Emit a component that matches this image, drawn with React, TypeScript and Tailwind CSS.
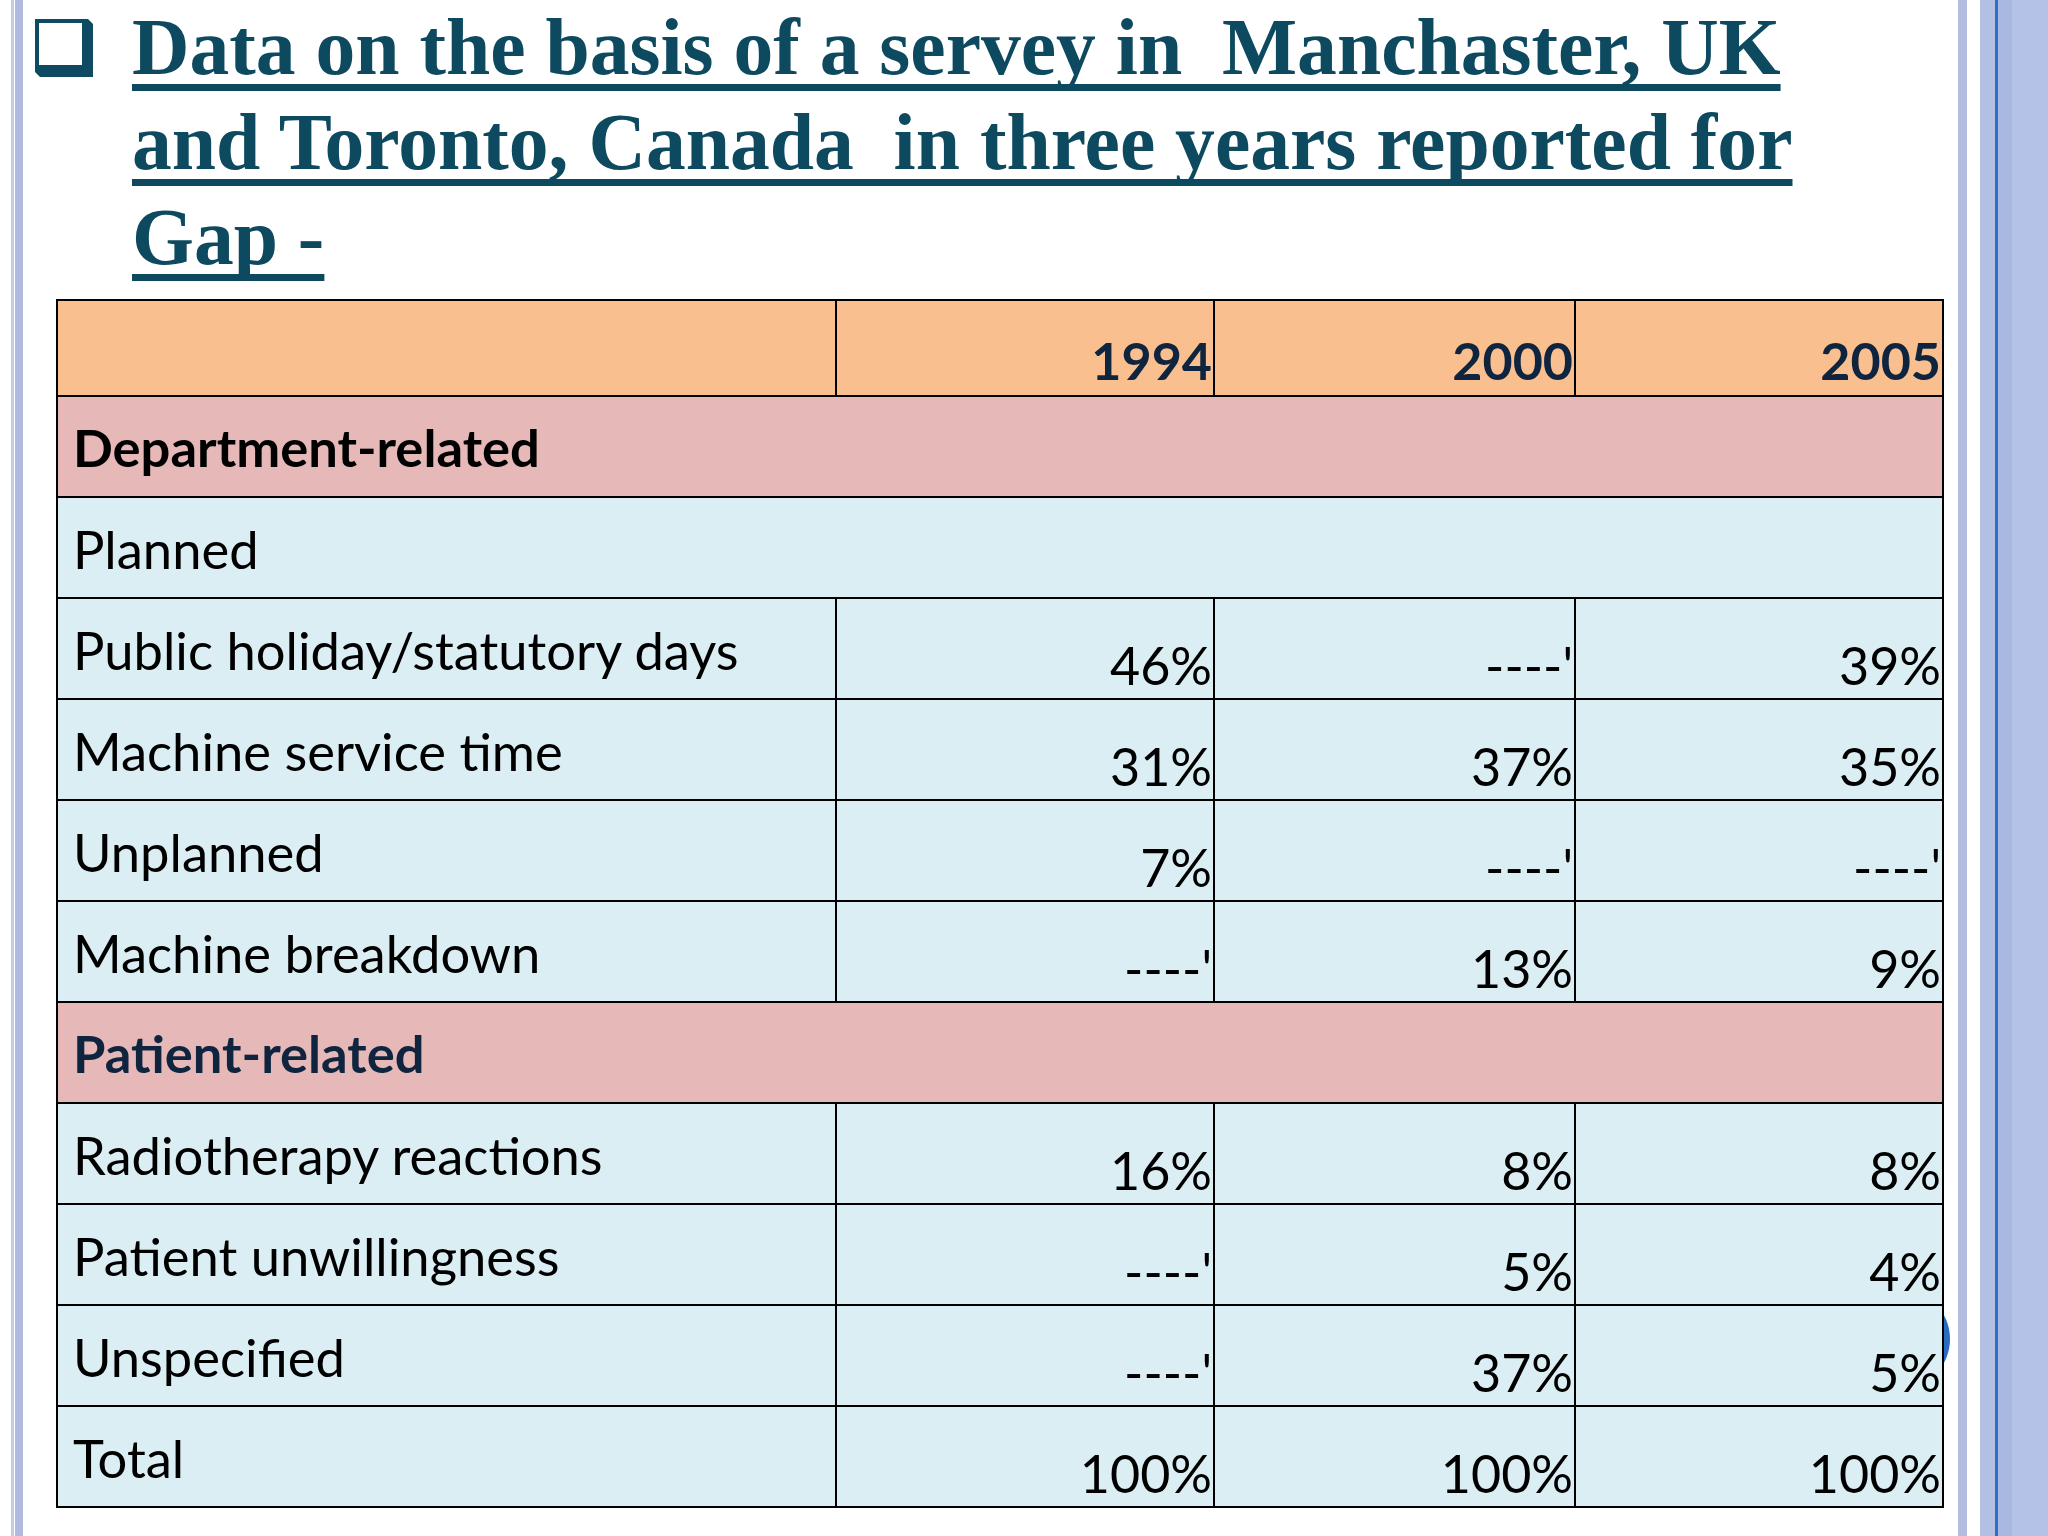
import React from "react";

type Row =
  | { kind: "section"; label: string; navy?: boolean }
  | { kind: "span"; label: string }
  | { kind: "data"; label: string; v: [string, string, string] };

const rows: Row[] = [
  { kind: "section", label: "Department-related" },
  { kind: "span", label: "Planned" },
  { kind: "data", label: "Public holiday/statutory days", v: ["46%", "----'", "39%"] },
  { kind: "data", label: "Machine service time", v: ["31%", "37%", "35%"] },
  { kind: "data", label: "Unplanned", v: ["7%", "----'", "----'"] },
  { kind: "data", label: "Machine breakdown", v: ["----'", "13%", "9%"] },
  { kind: "section", label: "Patient-related", navy: true },
  { kind: "data", label: "Radiotherapy reactions", v: ["16%", "8%", "8%"] },
  { kind: "data", label: "Patient unwillingness", v: ["----'", "5%", "4%"] },
  { kind: "data", label: "Unspecified", v: ["----'", "37%", "5%"] },
  { kind: "data", label: "Total", v: ["100%", "100%", "100%"] },
];

function CheckGlyph() {
  return (
    <svg width="58" height="58" viewBox="0 0 58 58" className="shrink-0">
      <path d="M0 0 H53 L58 5 V58 H5 L0 53 Z" fill="#0e4a61" />
      <rect x="4" y="4" width="43" height="42" fill="#ffffff" />
    </svg>
  );
}

export default function App() {
  const cell = "border-2 border-black";
  const label = "text-left align-top pl-[15px] pt-[25px] leading-none text-[52.5px]";
  const num = "text-right align-bottom pr-[1px] pb-[7px] leading-none";
  return (
    <div
      className="w-[2048px] h-[1536px] bg-white flex overflow-hidden"
      style={{ fontFamily: "Lato, 'Noto Sans', sans-serif" }}
    >
      <div className="w-[11px] shrink-0" />
      <div className="w-[3px] shrink-0 bg-[#c3cbe8]" />
      <div className="w-[1px] shrink-0" />
      <div className="w-[8px] shrink-0 bg-[#b1bbdf]" />

      <main className="w-[1935px] shrink-0 relative flex flex-col">
        <div className="h-[299px] flex items-start">
          <div className="ml-[12px] mt-[19px]">
            <CheckGlyph />
          </div>
          <h1
            className="ml-[39px] mt-[0px] text-[79.6px] leading-[95px] font-bold text-[#0d4a60] underline decoration-[7px] underline-offset-[10px] [text-decoration-skip-ink:none] whitespace-pre"
            style={{ fontFamily: "'Liberation Serif', 'Times New Roman', serif" }}
          >
            {"Data on the basis of a servey in  Manchaster, UK"}
            <br />
            {"and Toronto, Canada  in three years reported for"}
            <br />
            {"Gap -"}
          </h1>
        </div>

        <div className="relative ml-[33px] w-[1886px]">
          <div className="absolute left-[1794px] top-[990px] w-[100px] h-[100px] rounded-full bg-[#2a6cc2]" />
          <table className="relative w-[1886px] table-fixed border-collapse text-[52px] text-black">
            <colgroup>
              <col className="w-[779px]" />
              <col className="w-[378px]" />
              <col className="w-[361px]" />
              <col className="w-[368px]" />
            </colgroup>
            <tbody>
              <tr className="h-[96px] bg-[#f9bf8f]">
                <td className={cell} />
                {["1994", "2000", "2005"].map((y) => (
                  <td key={y} className={`${cell} ${num} pb-[9px] font-bold text-[#0f243e]`}>
                    {y}
                  </td>
                ))}
              </tr>
              {rows.map((r, i) => {
                if (r.kind === "section") {
                  return (
                    <tr key={i} className="h-[101px] bg-[#e6b8b7]">
                      <td
                        colSpan={4}
                        className={`${cell} text-left align-top pl-[15px] pt-[24px] leading-none font-bold text-[52.5px] ${r.navy ? "text-[#0f243e]" : "text-black"}`}
                      >
                        {r.label}
                      </td>
                    </tr>
                  );
                }
                if (r.kind === "span") {
                  return (
                    <tr key={i} className="h-[101px] bg-[#dbeef3]">
                      <td colSpan={4} className={`${cell} ${label}`}>
                        {r.label}
                      </td>
                    </tr>
                  );
                }
                return (
                  <tr key={i} className="h-[101px] bg-[#dbeef3]">
                    <td className={`${cell} ${label}`}>{r.label}</td>
                    {r.v.map((v, j) => (
                      <td key={j} className={`${cell} ${num}`}>
                        {v}
                      </td>
                    ))}
                  </tr>
                );
              })}
            </tbody>
          </table>
        </div>
      </main>

      <div className="w-[9px] shrink-0 bg-[#b3bde2]" />
      <div className="w-[13px] shrink-0 bg-white" />
      <div className="w-[15px] shrink-0 bg-[#b3bfe3]" />
      <div className="w-[3px] shrink-0 bg-[#2c6dc5]" />
      <div className="w-[14px] shrink-0 bg-[#a9b8e1]" />
      <div className="flex-1 bg-[#b3c2e6]" />
    </div>
  );
}
